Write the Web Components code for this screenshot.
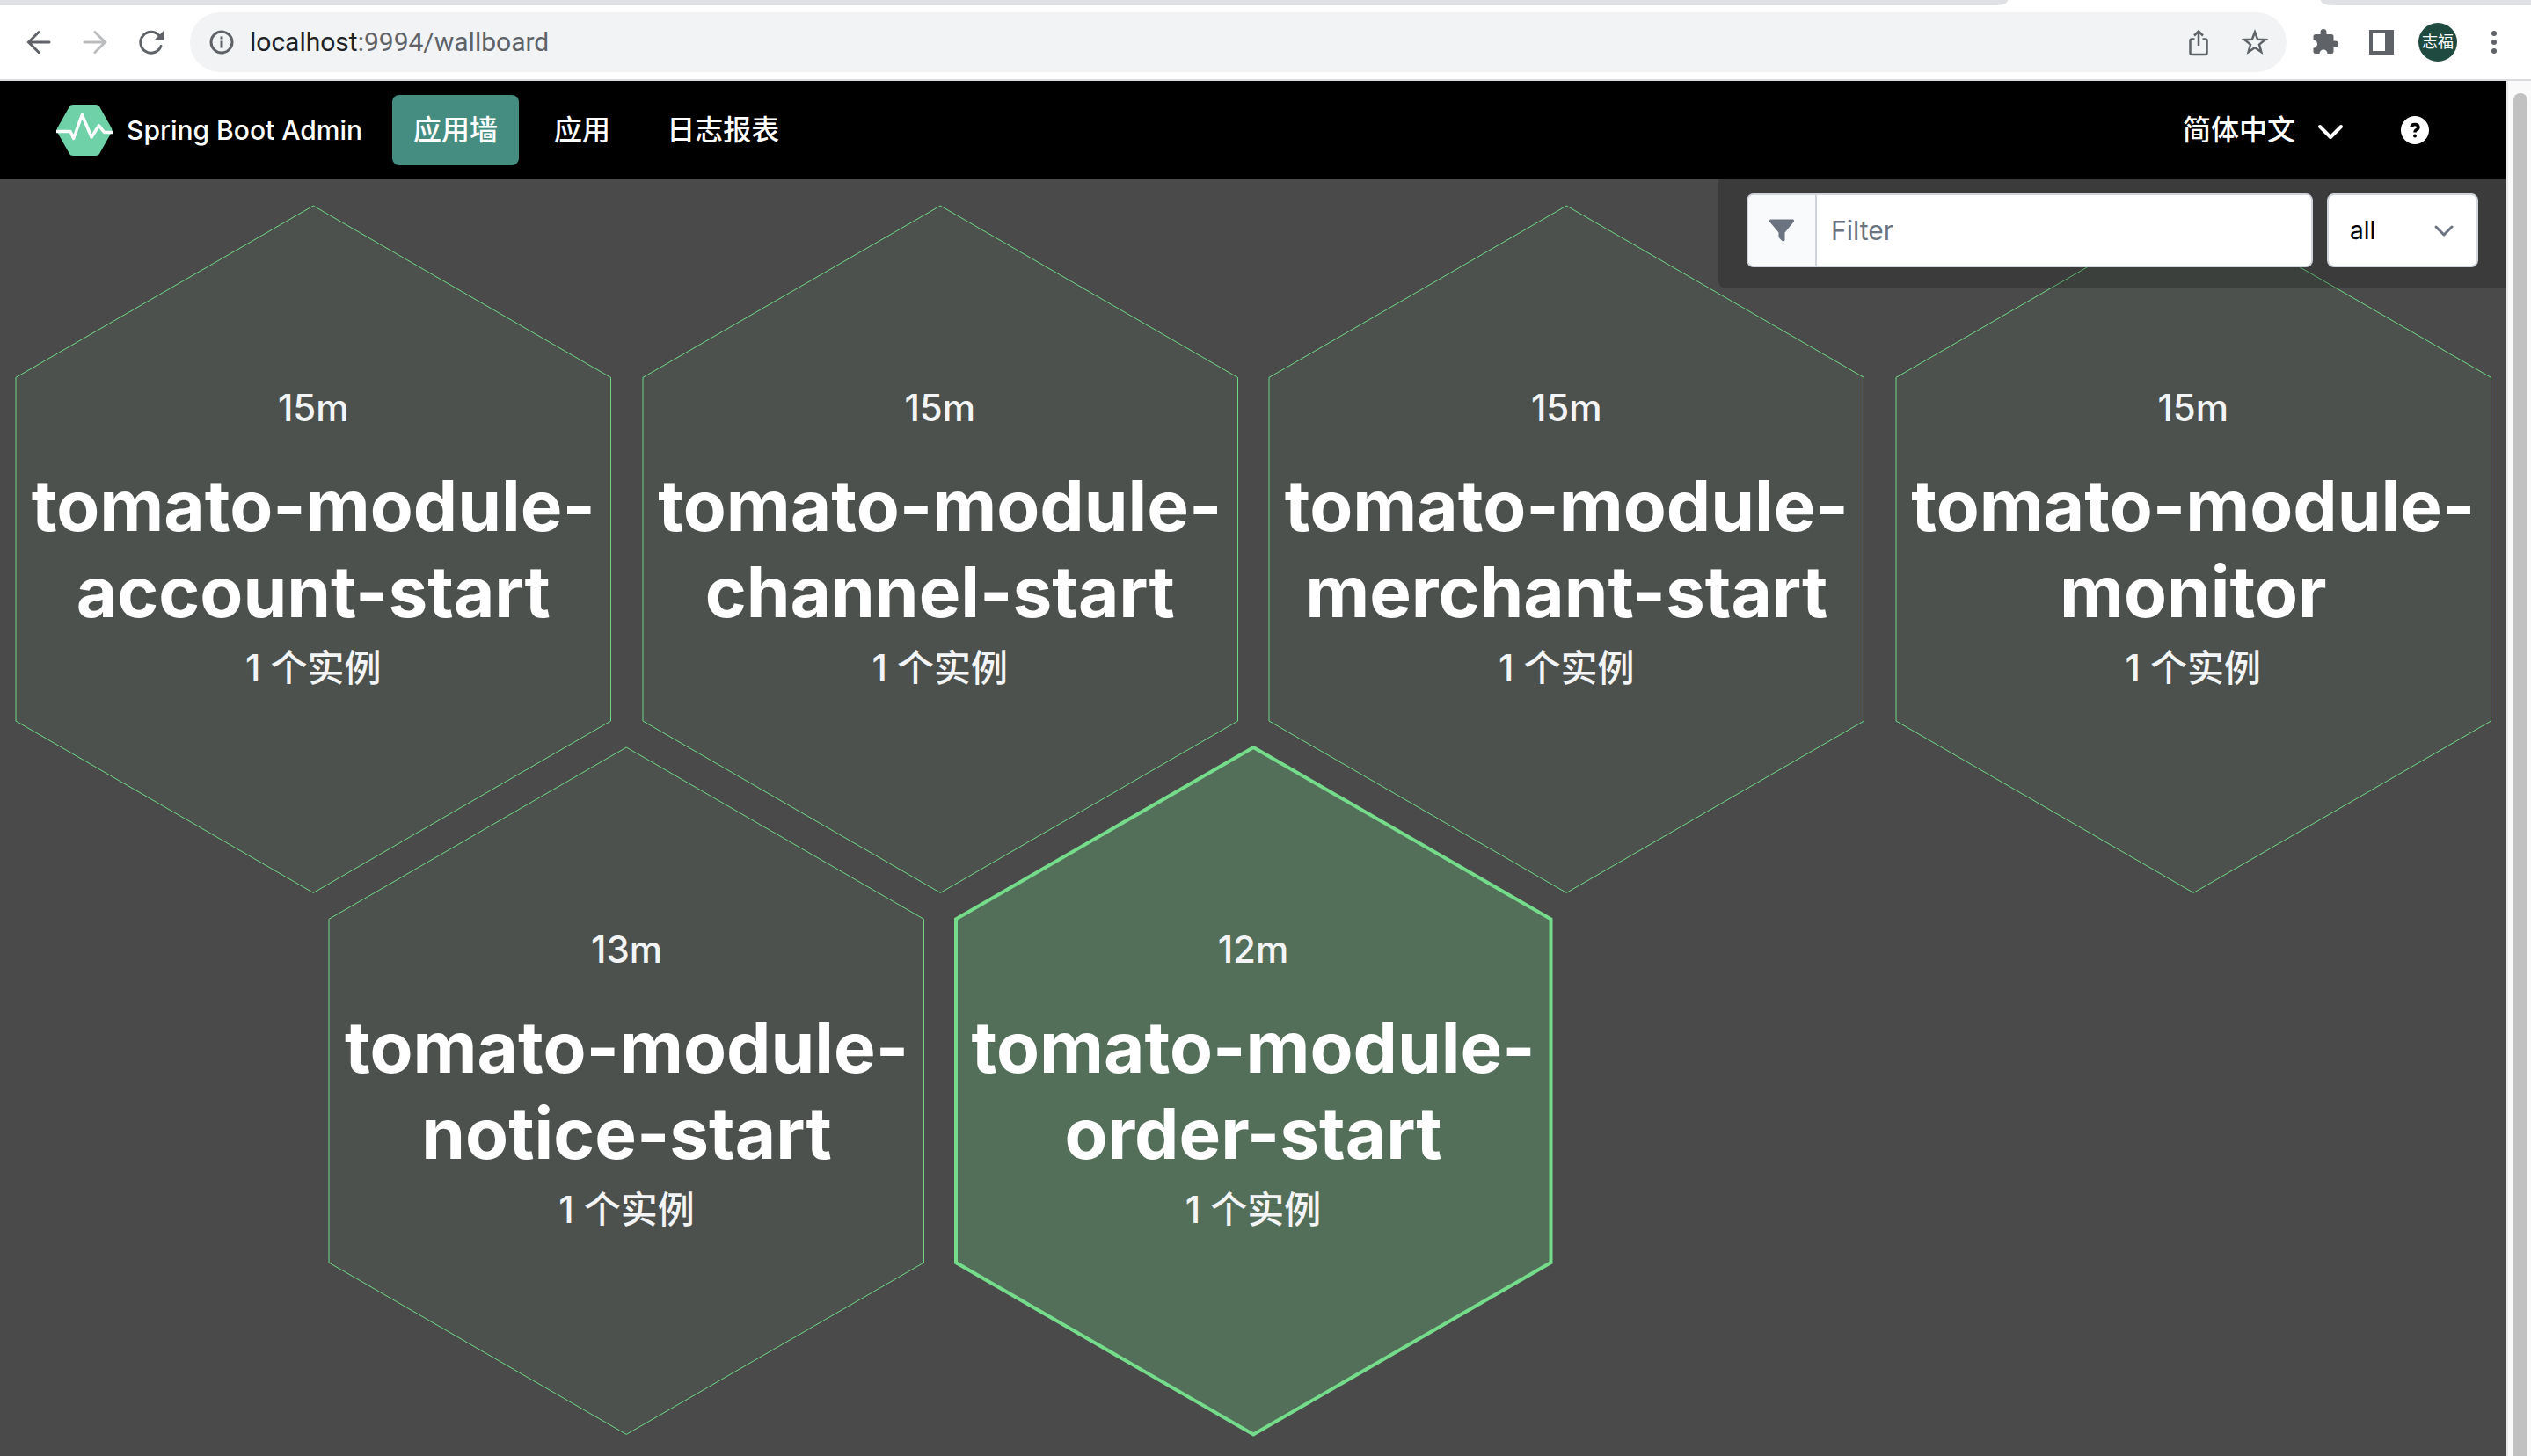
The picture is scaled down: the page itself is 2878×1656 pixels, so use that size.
<!DOCTYPE html>
<html lang="zh-CN">
<head>
<meta charset="utf-8">
<title>Spring Boot Admin</title>
<style>
html, body { margin: 0; height: 100%; }
body { font-family: Inter, "Noto Sans CJK SC", sans-serif; background: #4a4a4a; overflow: hidden; }
</style>
</head>
<body>
<browser-frame>
  <browser-toolbar slot="toolbar" host="localhost" path=":9994/wallboard"></browser-toolbar>
  <sba-navbar></sba-navbar>
  <sba-wallboard>
    <wall-filter slot="filter"></wall-filter>
    <hex-row>
      <hex-tile uptime="15m" count="1">tomato-module-account-start</hex-tile>
      <hex-tile uptime="15m" count="1">tomato-module-channel-start</hex-tile>
      <hex-tile uptime="15m" count="1">tomato-module-merchant-start</hex-tile>
      <hex-tile uptime="15m" count="1">tomato-module-monitor</hex-tile>
    </hex-row>
    <hex-row shifted>
      <hex-tile uptime="13m" count="1">tomato-module-notice-start</hex-tile>
      <hex-tile uptime="12m" count="1" active>tomato-module-order-start</hex-tile>
    </hex-row>
  </sba-wallboard>
</browser-frame>
<script>
const define = (name, render) => customElements.define(name, class extends HTMLElement {
  connectedCallback() {
    if (this.shadowRoot) return;
    this.attachShadow({ mode: 'open' }).innerHTML = render(this);
  }
});

define('browser-frame', () => `
<style>
:host { display: flex; flex-direction: column; height: 100vh; }
.body { display: flex; flex: 1; min-height: 0; }
.page { flex: 1; min-width: 0; display: flex; flex-direction: column; overflow: hidden; }
.track { box-sizing: border-box; width: 28px; padding: 14px 4px 0 6px; background: #fafafa; border-left: 2px solid #e8e8e8; overflow: hidden; }
.thumb { height: 100%; border-radius: 8px 8px 0 0; background: #c1c1c1; }
</style>
<slot name="toolbar"></slot>
<div class="body">
  <div class="page"><slot></slot></div>
  <div class="track"><div class="thumb"></div></div>
</div>`);

define('browser-toolbar', el => `
<style>
:host { display: block; background: #fff; border-bottom: 2px solid #dadce0; color: #5f6368; }
.tabs { display: flex; justify-content: space-between; height: 6px; }
.tabs i { background: #dfe1e5; }
.tabs .l { width: 2283px; flex: 0 1 auto; border-bottom-right-radius: 12px 6px; }
.tabs .r { width: 239px; border-bottom-left-radius: 12px 6px; }
.bar { display: flex; align-items: center; height: 84px; padding: 0 22px 0 24px; }
button { all: unset; display: flex; flex: none; }
svg { display: block; width: 40px; height: 40px; fill: none; stroke: currentColor; stroke-width: 3; }
.nav { display: flex; gap: 24px; margin-right: 24px; }
.nav svg { stroke-linecap: round; }
.nav .off { color: #babcbe; }
.pill { flex: 1; display: flex; align-items: center; height: 68px; border-radius: 34px; background: #f1f3f4; padding: 0 16px; gap: 12px; box-sizing: border-box; }
.url { flex: 1; font-size: 30px; line-height: 40px; font-family: Roboto, sans-serif; }
.url b { color: #202124; font-weight: 400; }
.acts { display: flex; gap: 24px; }
.ext { display: flex; align-items: center; gap: 22px; margin-left: 26px; }
.avatar { width: 44px; height: 44px; border-radius: 50%; background: #1f4a40; color: #fff; font-size: 18px; line-height: 44px; justify-content: center; }
</style>
<div class="tabs"><i class="l"></i><i class="r"></i></div>
<div class="bar">
  <div class="nav">
    <button aria-label="Back"><svg viewBox="0 0 40 40"><path d="M32 20H9M20 8.500L8.500 20 20 31.500"/></svg></button>
    <button class="off" aria-label="Forward"><svg viewBox="0 0 40 40"><path d="M8 20h23M20 8.500L31.500 20 20 31.500"/></svg></button>
    <button aria-label="Reload"><svg viewBox="0 0 40 40"><path d="M29 12.500A12 12 0 1 0 31 24.500"/><path d="M34 7v11H23z" fill="currentColor" stroke="none"/></svg></button>
  </div>
  <div class="pill">
    <button aria-label="Site information"><svg viewBox="0 0 40 40"><circle cx="20" cy="20" r="12"/><path d="M20 18.500v8M20 13.500v3"/></svg></button>
    <span class="url"><b>${el.getAttribute('host')}</b>${el.getAttribute('path')}</span>
    <div class="acts">
      <button aria-label="Share"><svg viewBox="0 0 40 40"><path d="M15.500 16.500H12q-1.500 0-1.500 1.500v14q0 2 2 2h15q2 0 2-2V18q0-1.500-1.500-1.500h-3.500M20 24V8M15 12.500l5-5 5 5" stroke-width="2.500"/></svg></button>
      <button aria-label="Bookmark"><svg viewBox="0 0 40 40"><path stroke-width="2.500" d="M20 8.500L23.100 16.700 31.900 17.100 25 22.600 27.300 31.100 20 26.300 12.700 31.100 15 22.600 8.100 17.100 16.900 16.700z"/></svg></button>
    </div>
  </div>
  <div class="ext">
    <button aria-label="Extensions"><svg viewBox="0 0 40 40"><path fill="currentColor" stroke="none" d="M7 11h5.500V8.500a3.500 3.500 0 0 1 7 0V11H25q2.500 0 2.500 2.500v5h2a3.700 3.700 0 0 1 0 7.400h-2v4.600q0 2.500-2.500 2.500h-4.500a4.500 4.500 0 0 0-9 0H7q-2.500 0-2.500-2.500v-4a4.500 4.500 0 0 0 0-9v-4Q4.500 11 7 11z"/></svg></button>
    <button aria-label="Side panel"><svg viewBox="0 0 40 40"><path fill="currentColor" fill-rule="evenodd" stroke="none" d="M6 6h28v28H6zM10 10v20h14V10z"/></svg></button>
    <button class="avatar" aria-label="Profile">志福</button>
    <button aria-label="Menu"><svg viewBox="0 0 40 40"><g fill="currentColor" stroke="none"><circle cx="20" cy="10" r="3"/><circle cx="20" cy="20" r="3"/><circle cx="20" cy="30" r="3"/></g></svg></button>
  </div>
</div>`);

define('sba-navbar', () => `
<style>
:host { display: flex; align-items: center; justify-content: space-between; flex: none; height: 112px; padding: 0 64px; background: #000; color: #fff; font-size: 32px; font-weight: 500; line-height: 48px; }
nav, .side { display: flex; align-items: center; gap: 16px; }
a { color: inherit; text-decoration: none; padding: 16px 24px; border-radius: 8px; }
a.brand { display: flex; align-items: center; gap: 16px; padding: 0 18px 0 0; font-size: 30px; }
a.on { background: #458d80; }
button { all: unset; display: flex; align-items: center; gap: 24px; padding: 16px 24px; }
svg { display: block; }
</style>
<nav>
  <a class="brand" href="#"><svg width="64" height="60" viewBox="0 0 64 60"><path fill="#6fd1a7" d="M19 1h26q3 0 4 2l14 25q1 2 0 4L49 57q-1 2-4 2H19q-3 0-4-2L1 32q-1-2 0-4L15 3q1-2 4-2z"/><path fill="none" stroke="#fff" stroke-width="3.500" stroke-linejoin="round" d="M0 31.500H16L19.700 39.500 29.300 12.500 40 38 48.500 24.800 54.500 32.500H64"/></svg><span>Spring Boot Admin</span></a>
  <a class="on" href="#wallboard">应用墙</a>
  <a href="#applications">应用</a>
  <a href="#journal">日志报表</a>
</nav>
<div class="side">
  <button>简体中文<svg width="32" height="32" viewBox="0 0 32 32" fill="none" stroke="#fff" stroke-width="4" stroke-linecap="round" stroke-linejoin="round"><path d="M4 12l12 12 12-12"/></svg></button>
  <button aria-label="Help"><svg width="32" height="32" viewBox="0 0 32 32"><circle cx="16" cy="16" r="16" fill="#fff"/><path d="M12 12.500q.500-3 4-3t4 3q0 2-2 3t-2 3" fill="none" stroke="#000" stroke-width="3.500"/><circle cx="16" cy="22.500" r="2"/></svg></button>
</div>`);

define('sba-wallboard', () => `
<style>
:host { display: grid; flex: 1; background: #4a4a4a; align-items: start; }
.wall, ::slotted([slot=filter]) { grid-area: 1 / 1; }
.wall { padding-top: 30px; min-width: 0; }
::slotted([slot=filter]) { justify-self: end; z-index: 1; }
</style>
<div class="wall"><slot></slot></div>
<slot name="filter"></slot>`);

define('wall-filter', () => `
<style>
:host { display: flex; gap: 16px; box-sizing: border-box; width: 896px; padding: 16px 32px 24px; background: rgba(0,0,0,.2); border-bottom-left-radius: 8px; }
.group { flex: 1; display: flex; height: 84px; box-sizing: border-box; border: 2px solid #d1d5db; border-radius: 8px; background: #fff; overflow: hidden; }
label { display: flex; align-items: center; justify-content: center; width: 76px; flex: none; background: #f9fafb; border-right: 2px solid #d1d5db; }
input { flex: 1; min-width: 0; border: 0; outline: 0; padding: 0 16px; background: #fff; font: 30px Inter, sans-serif; color: #000; }
input::placeholder { color: #6b7280; opacity: 1; }
.pick { display: grid; align-items: center; width: 172px; }
.pick > * { grid-area: 1 / 1; }
select { appearance: none; width: 100%; height: 84px; box-sizing: border-box; border: 2px solid #d1d5db; border-radius: 8px; background: #fff; color: #000; padding: 0 24px; font: 28px Inter, sans-serif; }
.pick svg { justify-self: end; margin-right: 24px; pointer-events: none; }
</style>
<div class="group">
  <label for="q" aria-label="Filter"><svg width="32" height="32" viewBox="0 0 32 32"><path fill="#6b7280" d="M3 3.500h26q2 1 .5 3L19.500 18.500V27q-1 2.500-3 1l-3-3q-1-1-1-2v-4.500L2.500 6.500q-1.500-2 .5-3z"/></svg></label>
  <input id="q" type="text" placeholder="Filter">
</div>
<div class="pick">
  <select aria-label="Status"><option>all</option></select>
  <svg width="32" height="32" viewBox="0 0 32 32" fill="none" stroke="#6b7280" stroke-width="3" stroke-linecap="round" stroke-linejoin="round"><path d="M8 12l9 9 9-9"/></svg>
</div>`);

define('hex-row', () => `
<style>
:host { display: flex; }
:host([shifted]) { margin-top: -5.8%; }
:host([shifted]) ::slotted(:first-child) { margin-left: 12.5%; }
::slotted(*) { flex: none; width: 25%; }
</style><slot></slot>`);

define('hex-tile', el => `
<style>
:host { display: grid; box-sizing: border-box; padding: 0 18px; --fill: rgba(113,222,137,.05); --line: #71d889; --w: 1px; }
:host([active]) { --fill: rgba(113,222,137,.25); --line: #74dc8a; --w: 4px; }
svg, .text { grid-area: 1 / 1; }
svg { width: 100%; height: auto; display: block; overflow: visible; }
polygon { fill: var(--fill); stroke: var(--line); stroke-width: var(--w); }
.text { display: flex; flex-direction: column; justify-content: center; text-align: center; padding-bottom: 26px; color: #f3f4f6; font-size: 42px; font-weight: 500; line-height: 60px; z-index: 1; }
h1 { margin: 32px 0 8px; font-size: 80px; line-height: 98px; font-weight: 700; color: #fff; }
</style>
<svg viewBox="0 0 677 782"><polygon points="338.500,0 677,195.500 677,586.500 338.500,782 0,586.500 0,195.500"/></svg>
<div class="text"><span>${el.getAttribute('uptime')}</span><h1><slot></slot></h1><span>${el.getAttribute('count')} 个实例</span></div>`);
</script>
</body>
</html>
